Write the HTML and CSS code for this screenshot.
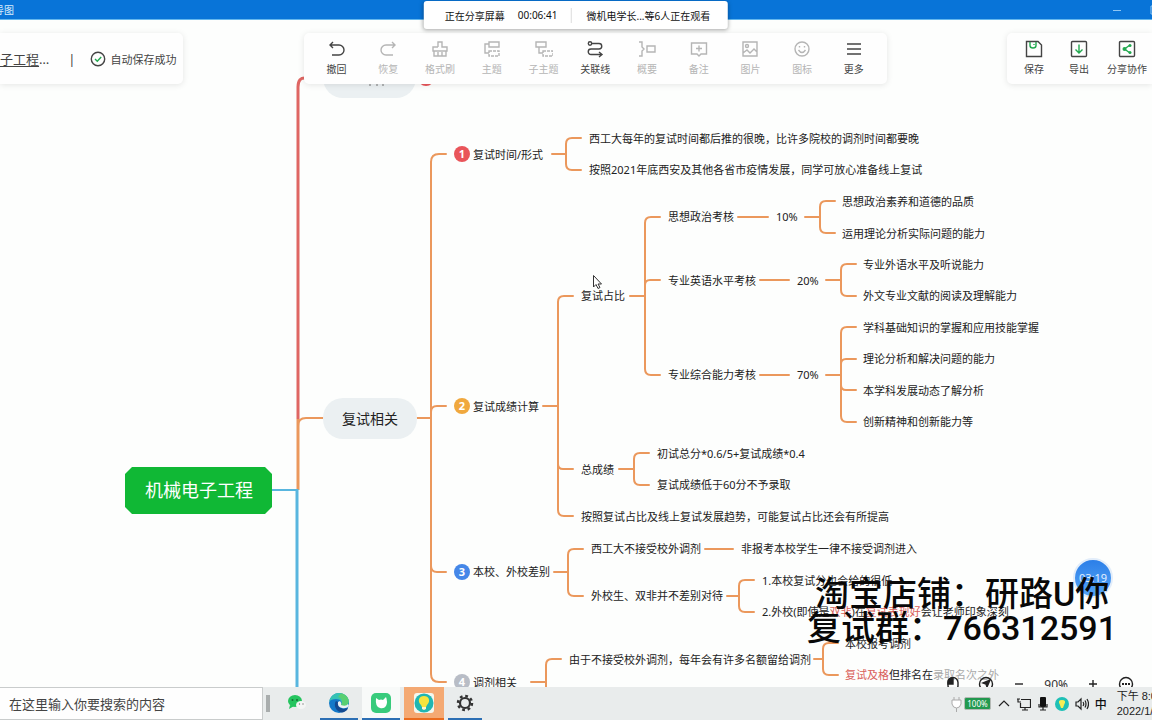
FILE: index.html
```html
<!DOCTYPE html>
<html lang="zh-CN">
<head>
<meta charset="utf-8">
<meta name="viewport" content="width=device-width, initial-scale=1">
<title>机械电子工程 - 思维导图</title>
<link rel="stylesheet" href="styles.css">
</head>
<body>
<div class="screen">
  <header class="titlebar">
    <span class="titlebar-name">导图</span>
    <div class="window-buttons">
      <button class="window-button" aria-label="最小化"><svg width="10" height="10"><path d="M1 5.500H9"/></svg></button>
      <button class="window-button" aria-label="最大化"><svg width="10" height="10"><path d="M1 1H9V9H1Z"/></svg></button>
    </div>
  </header>

  <main class="workspace">
    <svg class="mindmap" role="img" aria-label="机械电子工程思维导图">
      <g transform="translate(0 -20)">
        <path class="link red thick" d="M306 78Q298 77 298 87V419"/>
        <path class="link thick" d="M298 490V419"/>
        <path class="link" d="M298 426Q298 418 306 418H323M417 418H431"/>
        <path class="link blue" d="M272 490H297"/>
        <path class="link blue thick" d="M297 489V700"/>
        <path class="link" d="M446 154H439Q431 154 431 162V674Q431 682 439 682H446M431 412Q431 406 437 406H446M431 566Q431 572 437 572H446"/>
        <path class="link" d="M552 154H566M581 138H572Q566 138 566 144V164Q566 170 572 170H581"/>
        <path class="link" d="M543 406H558M573 296H564Q558 296 558 302V510Q558 516 564 516H573M558 464Q558 469 563 469H573"/>
        <path class="link" d="M630 296H645M660 217H651Q645 217 645 223V369Q645 375 651 375H660M645 285Q645 280 650 280H660"/>
        <path class="link" d="M738 217H768M805 217H820M835 201H826Q820 201 820 207V227Q820 233 826 233H835"/>
        <path class="link" d="M760 280H789M826 280H841M856 264H847Q841 264 841 270V290Q841 296 847 296H856"/>
        <path class="link" d="M760 375H789M826 375H841M856 327H847Q841 327 841 333V416Q841 422 847 422H856M841 364Q841 359 846 359H856M841 385Q841 390 846 390H856"/>
        <path class="link" d="M619 469H634M649 453H640Q634 453 634 459V479Q634 485 640 485H649"/>
        <path class="link" d="M554 572H568M583 549H574Q568 549 568 555V590Q568 596 574 596H583M705 549H733"/>
        <path class="link" d="M727 596H739M754 580H745Q739 580 739 586V606Q739 612 745 612H754"/>
        <path class="link" d="M531 682H546M561 659H552Q546 659 546 665V700"/>
        <path class="link" d="M814 659H823M838 643H829Q823 643 823 649V669Q823 675 829 675H838"/>

        <rect class="branch" x="323" y="57" width="93" height="41" rx="20"/>
        <path class="mark" d="M370 80V86M377 80V86M383 80V86"/>
        <circle class="badge-red" cx="426" cy="78" r="8"/>
        <rect class="branch" x="323" y="398" width="94" height="41" rx="20"/>
        <text class="branch-text" x="370" y="424">复试相关</text>
        <path class="root" d="M132 467H265L272 474V507L265 514H132L125 507V474Z"/>
        <text class="root-text" x="199" y="497">机械电子工程</text>

        <circle class="badge-red" cx="462" cy="154" r="8"/><text class="badge-text" x="462" y="158">1</text>
        <circle class="badge-amber" cx="462" cy="406" r="8"/><text class="badge-text" x="462" y="410">2</text>
        <circle class="badge-blue" cx="462" cy="572" r="8"/><text class="badge-text" x="462" y="576">3</text>
        <circle class="badge-gray" cx="462" cy="682" r="8"/><text class="badge-text" x="462" y="686">4</text>

        <g class="topic">
          <text x="473" y="159">复试时间/形式</text>
          <text x="589" y="143">西工大每年的复试时间都后推的很晚，比许多院校的调剂时间都要晚</text>
          <text x="589" y="174">按照2021年底西安及其他各省市疫情发展，同学可放心准备线上复试</text>

          <text x="473" y="411">复试成绩计算</text>
          <text x="581" y="300">复试占比</text>
          <text x="668" y="221">思想政治考核</text>
          <text x="776" y="221">10%</text>
          <text x="842" y="206">思想政治素养和道德的品质</text>
          <text x="842" y="238">运用理论分析实际问题的能力</text>
          <text x="668" y="285">专业英语水平考核</text>
          <text x="797" y="285">20%</text>
          <text x="863" y="269">专业外语水平及听说能力</text>
          <text x="863" y="300">外文专业文献的阅读及理解能力</text>
          <text x="668" y="379">专业综合能力考核</text>
          <text x="797" y="379">70%</text>
          <text x="863" y="332">学科基础知识的掌握和应用技能掌握</text>
          <text x="863" y="363">理论分析和解决问题的能力</text>
          <text x="863" y="395">本学科发展动态了解分析</text>
          <text x="863" y="426">创新精神和创新能力等</text>
          <text x="581" y="474">总成绩</text>
          <text x="657" y="458">初试总分*0.6/5+复试成绩*0.4</text>
          <text x="657" y="489">复试成绩低于60分不予录取</text>
          <text x="581" y="521">按照复试占比及线上复试发展趋势，可能复试占比还会有所提高</text>

          <text x="473" y="576">本校、外校差别</text>
          <text x="591" y="553">西工大不接受校外调剂</text>
          <text x="741" y="553">非报考本校学生一律不接受调剂进入</text>
          <text x="591" y="600">外校生、双非并不差别对待</text>
          <text x="762" y="585">1.本校复试分也会给的很低</text>
          <text x="762" y="616">2.外校(即使是<tspan class="warn">双非</tspan>)在<tspan class="warn">复试表现好</tspan>会让老师印象深刻</text>

          <text x="473" y="687">调剂相关</text>
          <text x="569" y="664">由于不接受校外调剂，每年会有许多名额留给调剂</text>
          <text x="845" y="648">本校报考调剂</text>
          <text x="845" y="679"><tspan class="warn">复试及格</tspan>但排名在<tspan class="faint">录取名次之外</tspan></text>
        </g>

        <path class="cursor" d="M593.500 275.500V287L596 284.500L598 288.500L600 287.500L598 284H601.500Z"/>
      </g>
    </svg>

    <div class="panels">
      <section class="panel file-panel">
        <a class="file-name" href="#">子工程</a><span class="file-dots">…</span>
        <span class="file-divider">|</span>
        <svg class="saved-icon" width="16" height="16" viewBox="0 0 16 16"><circle class="ink" cx="8" cy="8" r="6.700"/><path class="green" d="M5 8L7.300 10.200L11.200 6"/></svg>
        <span class="saved-text">自动保存成功</span>
      </section>

      <nav class="panel tool-panel" aria-label="工具栏">
        <button class="tool active"><svg viewBox="0 0 18 18"><path d="M5 2L2 5L5 8M2 5H11A5 5 0 0 1 11 15H4"/></svg>撤回</button>
        <button class="tool"><svg viewBox="0 0 18 18"><path d="M13 2L16 5L13 8M16 5H7A5 5 0 0 0 7 15H14"/></svg>恢复</button>
        <button class="tool"><svg viewBox="0 0 18 18"><path d="M7 7V2H11V7H16V11H2V7H7M3 11V16H15V11M7 16V12M11 16V12"/></svg>格式刷</button>
        <button class="tool"><svg viewBox="0 0 18 18"><path d="M6 2H16V7H6ZM6 4H2V13H6"/><path stroke-dasharray="3 1" d="M6 11H16V16H6Z"/></svg>主题</button>
        <button class="tool"><svg viewBox="0 0 18 18"><path d="M1 2H11V7H1ZM4 7V13H8"/><path stroke-dasharray="3 1" d="M8 11H18V16H8Z"/></svg>子主题</button>
        <button class="tool active"><svg viewBox="0 0 18 18"><circle cx="4" cy="3.500" r="1.700"/><path d="M6 3.500H13A2.700 2.700 0 0 1 13 9H5A2.700 2.700 0 0 0 5 14.500H15M13 12L16 14.500L13 17"/></svg>关联线</button>
        <button class="tool"><svg viewBox="0 0 18 18"><path d="M1 2H4V7L6 9L4 11V16H1M9 6H17V12H9Z"/></svg>概要</button>
        <button class="tool"><svg viewBox="0 0 18 18"><path d="M1.500 3H16.500V14H11L9 16L7 14H1.500ZM6 8.500H12M9 5.500V11.500"/></svg>备注</button>
        <button class="tool"><svg viewBox="0 0 18 18"><path d="M2 2H16V16H2ZM2 13L6 10L9 13L13 9L16 12"/><circle cx="6" cy="6" r="1.500"/></svg>图片</button>
        <button class="tool"><svg viewBox="0 0 18 18"><circle cx="9" cy="9" r="7"/><path d="M5.500 10Q9 15 12.500 10M6.500 6V7.500M11.500 6V7.500"/></svg>图标</button>
        <button class="tool active"><svg viewBox="0 0 18 18"><path d="M2 4H16M2 9H16M2 14H16"/></svg>更多</button>
      </nav>

      <nav class="panel share-panel" aria-label="文件操作">
        <button class="tool active"><svg viewBox="0 0 18 18"><path d="M1.500 1.500H13L16.500 5V16.500H1.500Z"/><path class="green" d="M5 2V5.500Q5 8 8 8Q11 8 11 5.500V2M9 4V5"/></svg>保存</button>
        <button class="tool active"><svg viewBox="0 0 18 18"><rect x="1.500" y="1.500" width="15" height="15" rx="1"/><path class="green" d="M9 4.500V12.500M5.500 9.500L9 13L12.500 9.500"/></svg>导出</button>
        <button class="tool active share"><svg viewBox="0 0 18 18"><rect x="1.500" y="1.500" width="15" height="15" rx="1"/><path class="green" d="M12 5L6.500 9L12 13"/><g class="green-dot"><circle cx="12" cy="5.500" r="1.500"/><circle cx="6.500" cy="9" r="2"/><circle cx="12" cy="12.500" r="1.500"/></g></svg>分享协作</button>
      </nav>
    </div>

    <div class="timer">03:19</div>

    <div class="view-bar">
      <button class="view-button" aria-label="鼠标模式"><svg viewBox="0 0 16 16"><rect x="3" y="1.500" width="10" height="13" rx="5"/><path class="solid" d="M8 2V8H3V6Q3 2 8 2Z"/></svg></button>
      <button class="view-button" aria-label="导航"><svg viewBox="0 0 16 16"><circle cx="8" cy="8" r="6.500"/><path class="solid" d="M12 4L9 11L8 8L5 7Z"/></svg></button>
      <button class="view-button" aria-label="缩小"><svg viewBox="0 0 16 16"><path d="M4 8H12"/></svg></button>
      <span class="zoom-value">90%</span>
      <button class="view-button" aria-label="放大"><svg viewBox="0 0 16 16"><path d="M4 8H12M8 4V12"/></svg></button>
      <button class="view-button" aria-label="更多选项"><svg viewBox="0 0 16 16"><circle cx="8" cy="8" r="6.500"/><path stroke-width="2" d="M4 8H6M7 8H9M10 8H12"/></svg></button>
    </div>
  </main>

  <footer class="taskbar">
    <input class="search" type="text" aria-label="搜索" placeholder="在这里输入你要搜索的内容">
    <span class="grip"></span>
    <div class="apps">
      <button class="app wechat" aria-label="微信"><svg width="20" height="20" viewBox="0 0 20 20"><ellipse cx="8" cy="8" rx="7" ry="6" fill="#25c45e"/><path d="M3 12L2 16L7 13Z" fill="#25c45e"/><circle cx="5.500" cy="7" r="1" fill="#176c36"/><circle cx="10" cy="7" r="1" fill="#176c36"/><ellipse cx="14" cy="12" rx="5" ry="4" fill="#f4f6f5"/><circle cx="12.500" cy="11" r=".7" fill="#777"/><circle cx="16" cy="11" r=".7" fill="#777"/></svg></button>
      <button class="app running" aria-label="Edge"><svg width="22" height="22" viewBox="0 0 22 22"><circle cx="11" cy="11" r="10" fill="#1479c9"/><path d="M1 10C3 2 9 0 14 1.500C20 3 22 9 20 12C18 15 14 14 13 13C15 10 12 7 8 7C5 7 2 8 1 10Z" fill="#36c2b4"/><path d="M13 1.300C20 3 22 9 20 12C18 15 14 14 13 13C15 10 14 6 10 5Z" fill="#59cf72"/><path d="M8 9C5 13 8 20 14 20.500C18 20 20 17 20 16C15 18 9 16 10 10Z" fill="#134a91"/><path d="M10 10Q9 15 14 16Q18 17 21 14L20 12Q18 15 13 13Q14 11 12 9Z" fill="#edf2f3"/></svg></button>
      <button class="app running light" aria-label="猫助手"><svg width="20" height="20" viewBox="0 0 20 20"><rect width="20" height="20" rx="5" fill="#38cb7c"/><path d="M5 5L8 7Q10 6 12 7L15 4Q17 9 15 13Q13 16 9 15Q4 14 5 5Z" fill="#fff"/></svg></button>
      <button class="app running current" aria-label="思维导图"><svg width="20" height="20" viewBox="0 0 20 20"><rect width="20" height="20" rx="3" fill="#f3f7ef"/><circle cx="10" cy="10" r="9.500" fill="#20b6b1"/><path d="M7 12C3 8 5 3 10 3S17 8 13 12L12 14H8Z" fill="#f5e43d"/><path d="M8 14H12V16L10 17L8 16Z" fill="#fff4cc"/></svg></button>
      <button class="app running settings" aria-label="设置"><svg width="18" height="18" viewBox="0 0 18 18" fill="none" stroke="#333"><circle cx="9" cy="9" r="5" stroke-width="2.200"/><circle cx="9" cy="9" r="7" stroke-width="2.500" stroke-dasharray="2.750 2.750"/></svg></button>
    </div>
    <div class="tray">
      <span class="power"><svg width="11" height="16" viewBox="0 0 11 16"><path d="M3 1V4M8 1V4M1 4H10V8Q9 12 5.500 12Q2 12 1 8ZM5.500 12V16" fill="#fff" stroke="#aaa"/></svg><span class="battery">100%</span></span>
      <svg width="14" height="14" viewBox="0 0 14 14"><path d="M2 9L7 4L12 9"/></svg>
      <svg width="14" height="14" viewBox="0 0 14 14"><path d="M4 2.500H13.500V10.500H3.500V6M8 10.500V13M5 13H11M0 2H3M1 2V5H4"/></svg>
      <svg width="12" height="14" viewBox="0 0 12 14"><rect x="3" y="0" width="6" height="10" rx="1" fill="#111" stroke="none"/><path d="M2 7V10H10V7M6 10V13M3 13H9"/></svg>
      <svg class="bulb" width="14" height="14" viewBox="0 0 14 14"><circle cx="7" cy="7" r="7" fill="#1fc0b6"/><path d="M5 8Q2 3 7 3T9 8L8 11H6Z" fill="#f6ee55"/></svg>
      <svg width="14" height="14" viewBox="0 0 14 14"><path d="M1 5H3L6 2V12L3 9H1ZM8 5Q9.500 7 8 9M10 3.500Q12 7 10 10.500M12 2Q15 7 12 12"/></svg>
      <button class="ime">中</button>
      <time class="clock"><span>下午 8:0</span><span>2022/1/</span></time>
    </div>
  </footer>

  <aside class="share-status"><span>正在分享屏幕</span><span>00:06:41</span><span class="viewers">微机电学长...等6人正在观看</span></aside>
  <p class="watermark">淘宝店铺：研路U你<br>复试群：766312591</p>
</div>
</body>
</html>
```
FILE: styles.css
```css
* { box-sizing: border-box; }

body {
  margin: 0;
  background: #fdfefd;
  color: #222;
  font-family: "Noto Sans", "Noto Sans CJK SC", sans-serif;
}

button {
  border: 0;
  padding: 0;
  background: none;
  color: inherit;
  font: inherit;
}

svg { flex: none; }

.screen {
  position: relative;
  display: grid;
  grid-template-rows: auto minmax(0, 1fr) auto;
  height: 100vh;
  overflow: hidden;
}

.titlebar {
  display: flex;
  justify-content: space-between;
  align-items: center;
  height: 20px;
  overflow: hidden;
  border-bottom: 1px solid #63b7ee;
  background: #0874d8;
  color: #d7ebfb;
  font-size: 10px;
}

.titlebar-name { margin-left: -6px; }

.window-buttons {
  display: flex;
  gap: 28px;
  margin-right: -8px;
}

.window-button { display: flex; }

.window-button svg {
  fill: none;
  stroke: #8fc6f3;
}

.workspace {
  position: relative;
  overflow: hidden;
}

.mindmap {
  display: block;
  width: 100%;
  height: 100%;
}

.link {
  fill: none;
  stroke: #eb985c;
  stroke-width: 2;
  stroke-linecap: round;
}

.thick { stroke-width: 3; stroke-linecap: butt; }
.red { stroke: #df6663; }
.blue { stroke: #58b6df; }
.branch { fill: #ebf0f2; }
.mark { stroke: #777; }
.root { fill: #10b835; }
.badge-red { fill: #e9555a; }
.badge-amber { fill: #f0a83e; }
.badge-blue { fill: #4587e8; }
.badge-gray { fill: #b8bdc6; }

.root-text {
  fill: #fff;
  font-size: 18px;
  text-anchor: middle;
}

.branch-text {
  fill: #222;
  font-size: 14px;
  text-anchor: middle;
}

.badge-text {
  fill: #fff;
  font-size: 11px;
  font-weight: 700;
  text-anchor: middle;
}

.topic {
  fill: #222;
  font-size: 11px;
}

.warn { fill: #d9605a; }
.faint { fill: #aaa; }

.cursor {
  fill: #fff;
  stroke: #333;
}

.panels {
  position: absolute;
  top: 13px;
  right: 0;
  left: 0;
  display: flex;
  justify-content: space-between;
}

.panel {
  display: flex;
  align-items: center;
  height: 51px;
  border-radius: 5px;
  background: #fefefe;
  box-shadow: 0 1px 6px rgba(0, 0, 0, 0.1);
}

.file-panel {
  padding-right: 7px;
  border-radius: 0 5px 5px 0;
  font-size: 11px;
  color: #444;
}

.file-name, .file-dots {
  color: #444;
  font-size: 13px;
}

.file-name { text-underline-offset: 2px; }

.file-divider {
  margin: 0 15px 0 19px;
  font-size: 13px;
}

.saved-icon { margin-right: 4px; }

.saved-icon, .tool svg {
  fill: none;
  stroke: currentColor;
  stroke-width: 1.4;
}

.tool-panel {
  display: grid;
  grid-template-columns: repeat(11, minmax(0, 1fr));
  flex: 0 1 583px;
  padding: 0 7px;
}

.tool {
  display: flex;
  flex-direction: column;
  align-items: center;
  gap: 4px;
  color: #b5b5b5;
  font-size: 10px;
  line-height: 15px;
  white-space: nowrap;
}

.tool svg {
  width: 18px;
  height: 18px;
}

.tool.active { color: #444; }
.tool .green, .saved-icon .green { stroke: #22a84f; }

.tool .green-dot {
  fill: #22a84f;
  stroke: none;
}

.share-panel {
  gap: 25px;
  padding: 0 5px 0 17px;
  border-radius: 5px 0 0 5px;
}

.share-panel .share { margin-left: -7px; }

.timer {
  position: absolute;
  right: 39px;
  bottom: 89px;
  width: 40px;
  height: 40px;
  border: 2px solid #e2edfa;
  border-radius: 50%;
  background: linear-gradient(#2c7fe8, #54a4f6);
  color: #e2efff;
  font-size: 11px;
  line-height: 36px;
  text-align: center;
}

.view-bar {
  position: absolute;
  right: 18px;
  bottom: -9px;
  display: flex;
  align-items: center;
  gap: 17px;
  height: 24px;
  color: #333;
  font-size: 12px;
}

.view-button { display: flex; }

.view-button svg {
  width: 16px;
  height: 16px;
  fill: none;
  stroke: #222;
  stroke-width: 1.4;
}

.view-button .solid { fill: #222; }

.taskbar {
  position: relative;
  display: flex;
  height: 33px;
  overflow: hidden;
  background: #e9ecec;
}

.search {
  flex: 0 0 263px;
  min-width: 0;
  padding: 0 9px;
  border: 1px solid #c9cccc;
  border-left: 0;
  border-radius: 0;
  background: #fefefe;
  font-family: inherit;
  font-size: 13px;
}

.search::placeholder { color: #444; opacity: 1; }

.grip {
  width: 4px;
  margin: 8px 8px 8px 3px;
  background: #a9adad;
}

.apps { display: flex; gap: 4px; }

.app {
  display: flex;
  justify-content: center;
  align-items: center;
  width: 38px;
  border-bottom: 2px solid transparent;
}

.running { border-color: #2c6fb4; }
.light { background: #f8faf9; }

.current {
  width: 40px;
  border-color: #ea6b1d;
  background: #f4a973;
}

.settings { width: 34px; }

.tray {
  display: flex;
  align-items: center;
  gap: 6px;
  margin-left: auto;
}

.tray > svg {
  fill: none;
  stroke: #222;
  stroke-width: 1.2;
}

.tray > .bulb { stroke: none; }

.power {
  display: flex;
  align-items: center;
  gap: 2px;
}

.power .battery {
  padding: 0 2px;
  border: 1px solid #b5bab6;
  border-radius: 2px;
  background: #22994f;
  color: #fff;
  font-size: 8px;
  line-height: 11px;
}

.ime {
  color: #111;
  font-size: 12px;
  font-weight: 500;
}

.clock {
  display: flex;
  flex-direction: column;
  align-items: flex-start;
  margin-left: 4px;
  margin-right: -5px;
  font-family: "Liberation Sans", "Noto Sans CJK SC", sans-serif;
  font-size: 11px;
  line-height: 15px;
  white-space: nowrap;
}

.share-status {
  position: absolute;
  top: 1px;
  left: 50%;
  display: flex;
  align-items: center;
  gap: 13px;
  height: 28px;
  padding: 0 18px 0 21px;
  border-radius: 3px;
  background: #fff;
  box-shadow: 0 1px 4px rgba(0, 0, 0, 0.35);
  color: #111;
  font-size: 10px;
  white-space: nowrap;
  transform: translateX(-50%);
}

.viewers {
  padding-left: 15px;
  border-left: 1px solid #ddd;
}

.watermark {
  position: absolute;
  right: 35px;
  bottom: 75px;
  margin: 0;
  color: #080808;
  font-family: Roboto, "Noto Sans CJK SC", sans-serif;
  font-size: 34px;
  font-weight: 500;
  line-height: 34px;
  text-align: center;
  white-space: nowrap;
}
```
